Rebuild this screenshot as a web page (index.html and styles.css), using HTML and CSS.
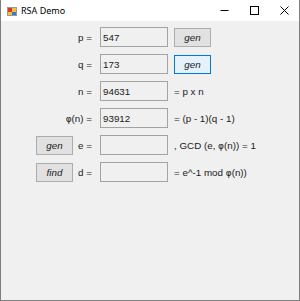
FILE: index.html
```html
<!DOCTYPE html>
<html>
<head>
<meta charset="utf-8">
<link rel="stylesheet" href="styles.css">
</head>
<body>
<div class="window">
  <div class="titlebar">
    <svg class="app-icon" width="10" height="10" viewBox="0 0 10 10">
      <rect x="0.5" y="1.5" width="9" height="8" fill="#f4f4f4" stroke="#9a9a9a"/>
      <rect x="1" y="2" width="4" height="4" fill="#d83a2c"/>
      <rect x="5" y="2" width="4" height="4" fill="#f2c230"/>
      <rect x="1" y="6" width="4" height="3" fill="#f2c230"/>
      <rect x="5" y="6" width="4" height="3" fill="#3a78d6"/>
    </svg>
    <span class="title">RSA Demo</span>
    <div class="caption-buttons">
      <span class="cap-btn"><svg width="9" height="9" viewBox="0 0 9 9"><path d="M0.5 4.5h8" stroke="#000" stroke-width="1"/></svg></span>
      <span class="cap-btn"><svg width="9" height="9" viewBox="0 0 9 9"><rect x="0.5" y="0.5" width="8" height="8" fill="none" stroke="#000" stroke-width="1"/></svg></span>
      <span class="cap-btn"><svg width="9" height="9" viewBox="0 0 9 9"><path d="M0.5 0.5L8.5 8.5M8.5 0.5L0.5 8.5" stroke="#000" stroke-width="1"/></svg></span>
    </div>
  </div>
  <div class="client">
    <div class="form-grid">
      <span class="label wide">p =</span>
      <div class="textbox">547</div>
      <button class="btn">gen</button>

      <span class="label wide">q =</span>
      <div class="textbox">173</div>
      <button class="btn focused">gen</button>

      <span class="label wide">n =</span>
      <div class="textbox">94631</div>
      <span class="note">= p x n</span>

      <span class="label wide"><span class="greek">φ</span>(n) =</span>
      <div class="textbox">93912</div>
      <span class="note">= (p - 1)(q - 1)</span>

      <button class="btn left">gen</button>
      <span class="label">e =</span>
      <div class="textbox"></div>
      <span class="note">, GCD (e, <span class="greek">φ</span>(n)) = 1</span>

      <button class="btn left">find</button>
      <span class="label">d =</span>
      <div class="textbox"></div>
      <span class="note">= e^-1 mod <span class="greek">φ</span>(n))</span>
    </div>
  </div>
</div>
</body>
</html>
```

FILE: styles.css
```css
* { box-sizing: border-box; }
html, body { margin: 0; padding: 0; background: #f0f0f0; }
body { width: 300px; height: 301px; overflow: hidden; }

.window {
  width: 300px;
  height: 301px;
  border: 1px solid #7e7e7e;
  border-top: none;
  background: #f0f0f0;
  display: flex;
  flex-direction: column;
  font-family: "Liberation Sans", Arial, sans-serif;
}

.titlebar {
  height: 21px;
  background: #fff;
  display: flex;
  align-items: center;
  padding-left: 6px;
  flex-shrink: 0;
}
.app-icon { display: block; margin-right: 4px; }
.title {
  font-family: "Noto Sans", "Open Sans", sans-serif;
  font-size: 9px;
  color: #000;
  line-height: 1;
}
.caption-buttons { margin-left: auto; display: flex; height: 100%; }
.cap-btn {
  width: 30px;
  display: flex;
  align-items: center;
  justify-content: center;
}

.client { flex: 1; }

.form-grid {
  display: grid;
  grid-template-columns: 37px 27px 68px auto;
  grid-auto-rows: 20px;
  row-gap: 7px;
  padding: 6px 0 0 35px;
  font-size: 9.8px;
  color: #1a1a1a;
}

.greek {
  font-family: "DejaVu Sans", "Noto Sans", sans-serif;
  font-size: 9px;
  font-weight: normal;
}

.label {
  grid-column: 2;
  justify-self: end;
  align-self: center;
  padding-right: 8px;
  white-space: nowrap;
}
.label.wide { grid-column: 1 / 3; }

.textbox {
  grid-column: 3;
  border: 1px solid #a3a3a3;
  background: #f0f0f0;
  padding: 3px 0 0 2px;
  line-height: 13px;
  font-size: 9.8px;
}

.btn {
  grid-column: 4;
  margin-left: 6px;
  width: 37px;
  height: 19px;
  align-self: center;
  border: 1px solid #adadad;
  background: #e1e1e1;
  font-family: "Liberation Sans", Arial, sans-serif;
  font-size: 9.8px;
  font-style: italic;
  color: #1a1a1a;
  padding: 0;
}
.btn.left { grid-column: 1; margin-left: 0; }
.btn.focused { border-color: #0078d7; background: #e5f1fb; }

.note {
  grid-column: 4;
  margin-left: 6px;
  align-self: center;
  white-space: nowrap;
}
```
